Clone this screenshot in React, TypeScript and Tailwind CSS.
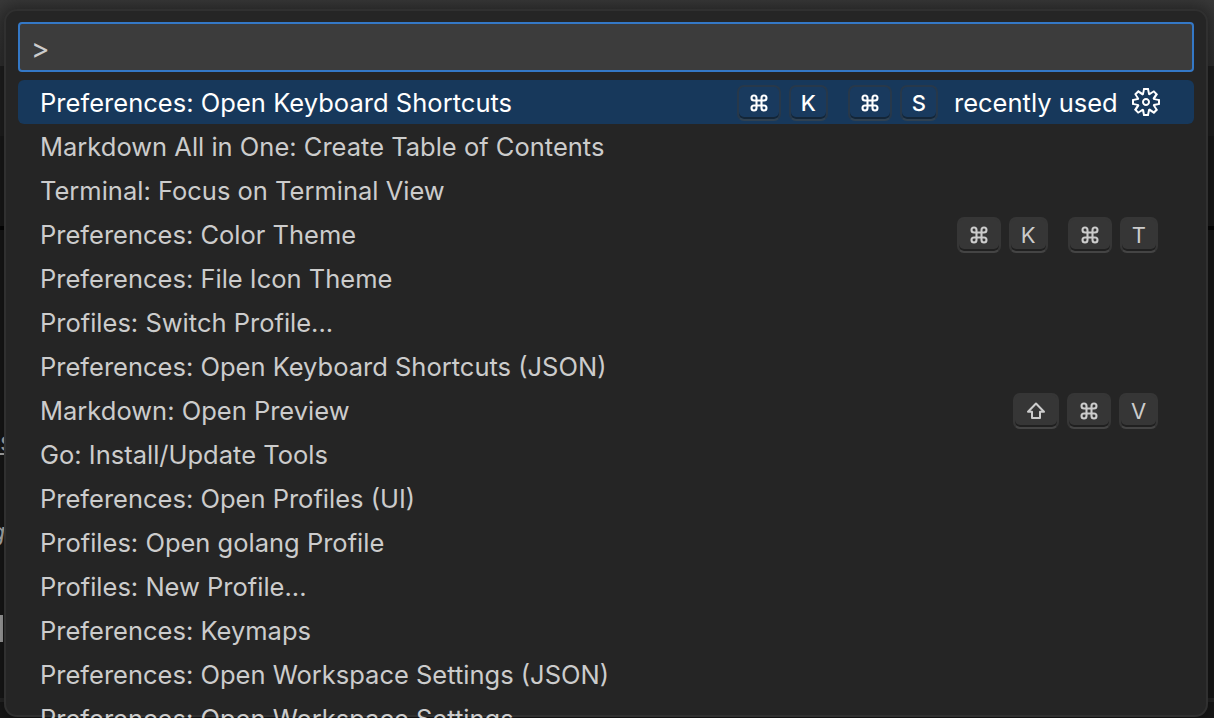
import { Command } from "lucide-react";

type Item = { label: string; chords?: string[][] };

const items: Item[] = [
  { label: "Markdown All in One: Create Table of Contents" },
  { label: "Terminal: Focus on Terminal View" },
  { label: "Preferences: Color Theme", chords: [["⌘", "K"], ["⌘", "T"]] },
  { label: "Preferences: File Icon Theme" },
  { label: "Profiles: Switch Profile..." },
  { label: "Preferences: Open Keyboard Shortcuts (JSON)" },
  { label: "Markdown: Open Preview", chords: [["⇧", "⌘", "V"]] },
  { label: "Go: Install/Update Tools" },
  { label: "Preferences: Open Profiles (UI)" },
  { label: "Profiles: Open golang Profile" },
  { label: "Profiles: New Profile..." },
  { label: "Preferences: Keymaps" },
  { label: "Preferences: Open Workspace Settings (JSON)" },
  { label: "Preferences: Open Workspace Settings" },
];

function ShiftIcon() {
  return (
    <svg width="20" height="18" viewBox="0 0 20 18" fill="none" stroke="currentColor" strokeWidth="2" strokeLinejoin="round">
      <path d="M10 1.5 L18 9.8 H14 V15.9 H6 V9.8 H2 Z" />
    </svg>
  );
}

function GearIcon() {
  return (
    <svg width="32" height="32" viewBox="0 0 16 16" fill="currentColor" fillRule="evenodd">
      <path d="M9.1 4.4L8.6 2H7.4l-.5 2.4-.7.3-2-1.3-.9.8 1.3 2-.2.7-2.4.5v1.2l2.4.5.3.8-1.3 2 .8.8 2-1.3.8.3.4 2.3h1.2l.5-2.4.8-.3 2 1.3.8-.8-1.3-2 .3-.8 2.3-.4V7.4l-2.4-.5-.3-.8 1.3-2-.8-.8-2 1.3-.7-.2zM9.4 1l.5 2.4L12 2.1l2 2-1.4 2.1 2.4.4v2.8l-2.4.5L14 12l-2 2-2.1-1.4-.5 2.4H6.6l-.5-2.4L4 13.9l-2-2 1.4-2.1L1 9.4V6.6l2.4-.5L2.1 4l2-2 2.1 1.4.4-2.4h2.8zm.6 7c0 1.1-.9 2-2 2s-2-.9-2-2 .9-2 2-2 2 .9 2 2zM8 9c.6 0 1-.4 1-1s-.4-1-1-1-1 .4-1 1 .4 1 1 1z" />
    </svg>
  );
}

function Key({ name, selected }: { name: string; selected?: boolean }) {
  const width =
    name === "⌘" ? "w-11" : name === "⇧" ? "w-[46px]" : name === "V" ? "w-[39px]" : "w-[38.5px]";
  const tone = selected
    ? "border-[#27384a] border-b-[#2f4152] bg-[#193a5e] font-[450] shadow-[inset_0_-2px_0_#142638]"
    : "border-[#363636] border-b-[#444444] bg-[#363636] font-[420] shadow-[inset_0_-2px_0_#202020]";
  return (
    <span className={`flex h-9 items-center justify-center rounded-[7px] border-2 text-[22px] leading-none ${width} ${tone}`}>
      {name === "⌘" ? <Command size={20} strokeWidth={2.5} /> : name === "⇧" ? <ShiftIcon /> : name}
    </span>
  );
}

function Chords({ chords, selected }: { chords: string[][]; selected?: boolean }) {
  return (
    <span className="flex gap-5 pt-0.5">
      {chords.map((keys, i) => (
        <span key={i} className="flex gap-2">
          {keys.map((k) => (
            <Key key={k} name={k} selected={selected} />
          ))}
        </span>
      ))}
    </span>
  );
}

export default function App() {
  return (
    <div className="relative h-[718px] w-[1214px] overflow-hidden bg-[#181818] font-['Inter',sans-serif] text-[25.5px] font-[430] text-[#cccccc]">
      <div className="h-[66px] bg-linear-to-b from-[#393939] to-[#303030]" />
      <div className="h-[70px] bg-[#1f1f1f]" />
      <div className="h-[90px] bg-[#191919]" />
      <div className="h-1 bg-[#050505]" />
      <div className="h-[468px]" />
      <div className="h-1 bg-[#262626]" />
      <span className="absolute top-[427px] left-0 text-[26px] leading-[30px] text-[#bbbbbb] underline">s</span>
      <span className="absolute top-[517px] -left-[10px] text-[25px] leading-[30px] text-[#bbbbbb] italic">g</span>
      <span className="absolute top-[615px] left-0 h-[27px] w-[3px] bg-[#aaaaaa]" />

      <div className="absolute top-[9px] left-1 flex h-[708px] w-[1204px] flex-col rounded-[13px] border-2 border-[#303030] bg-[#252525] px-3 pt-[11px] shadow-[0_0_16px_4px_rgba(0,0,0,0.36)]">
        <div className="flex h-[50px] shrink-0 items-center rounded-[4px] border-2 border-[#3478c6] bg-[#3c3c3c] pt-[3px] pl-[11px] text-[28px] text-[#cccccc]">
          &gt;
        </div>
        <div className="mt-2 flex h-11 shrink-0 items-center rounded-[6px] bg-[#17385b] pr-8 pl-[22px] text-white">
          <span className="flex-1 pt-[3px] tracking-[0.03px] whitespace-nowrap">Preferences: Open Keyboard Shortcuts</span>
          <Chords chords={[["⌘", "K"], ["⌘", "S"]]} selected />
          <span className="ml-4 w-[164px] pt-[3px] whitespace-nowrap">recently used</span>
          <span className="ml-3">
            <GearIcon />
          </span>
        </div>
        {items.map((item) => (
          <div key={item.label} className="flex h-11 shrink-0 items-center pr-9 pl-[22px]">
            <span className="flex-1 pt-[3px] whitespace-nowrap">{item.label}</span>
            {item.chords && <Chords chords={item.chords} />}
          </div>
        ))}
      </div>
    </div>
  );
}
